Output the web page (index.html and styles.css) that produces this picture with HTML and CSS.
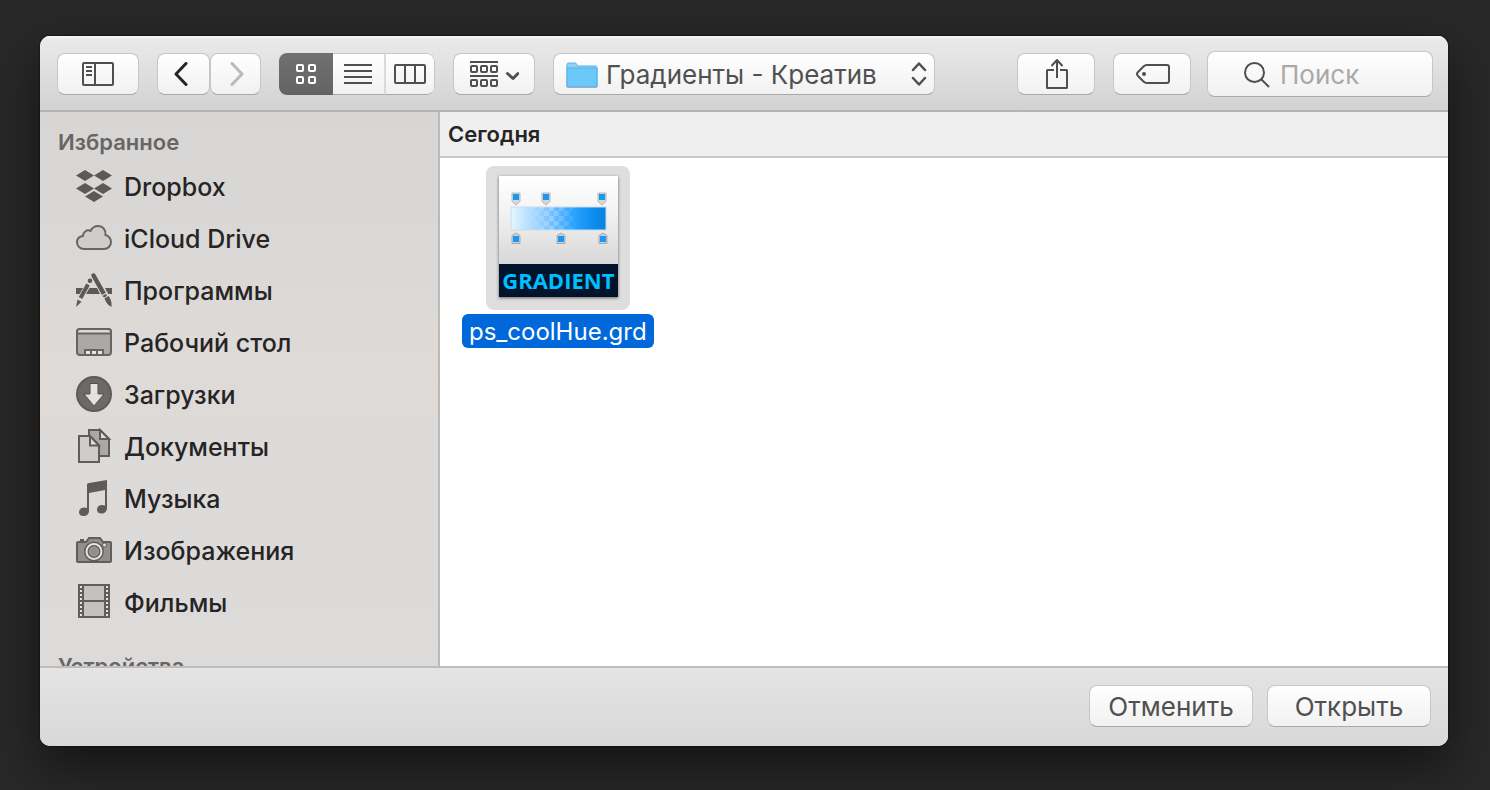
FILE: index.html
```html
<!DOCTYPE html>
<html lang="ru">
<head>
<meta charset="utf-8">
<title>Открыть</title>
<link rel="stylesheet" href="styles.css">
</head>
<body>
<main class="dialog">
  <header class="toolbar">
    <button class="btn btn-wide" type="button" aria-label="Боковая панель">
      <svg width="32" height="24" viewBox="0 0 32 24" fill="none" stroke="#4f4f4f" stroke-width="2"><rect x="1" y="1" width="30" height="22" rx="1"/><path d="M13 1v22M4 5h6M4 9h6M4 13h6"/></svg>
    </button>
    <div class="nav">
      <button class="btn btn-back" type="button" aria-label="Назад">
        <svg width="14" height="24" viewBox="0 0 14 24" fill="none" stroke="#262626" stroke-width="3" stroke-linecap="round" stroke-linejoin="round"><path d="M12 1.5 2 12l10 10.500"/></svg>
      </button>
      <button class="btn btn-forward" type="button" aria-label="Вперед" disabled>
        <svg width="14" height="24" viewBox="0 0 14 24" fill="none" stroke="#b9b9b9" stroke-width="3" stroke-linecap="round" stroke-linejoin="round"><path d="m2 1.500 10 10.500-10 10.500"/></svg>
      </button>
    </div>
    <div class="segments btn" role="group" aria-label="Вид">
      <button class="segment segment-on" type="button" aria-label="Значки" aria-pressed="true">
        <svg width="20" height="20" viewBox="0 0 20 20" fill="none" stroke="#fff" stroke-width="2"><rect x="1" y="1" width="6" height="6" rx="1"/><rect x="13" y="1" width="6" height="6" rx="1"/><rect x="1" y="13" width="6" height="6" rx="1"/><rect x="13" y="13" width="6" height="6" rx="1"/></svg>
      </button>
      <button class="segment segment-list" type="button" aria-label="Список">
        <svg width="28" height="20" viewBox="0 0 28 20" stroke="#4f4f4f" stroke-width="2"><path d="M0 1h28M0 7h28M0 13h28M0 19h28"/></svg>
      </button>
      <button class="segment" type="button" aria-label="Колонки">
        <svg width="32" height="20" viewBox="0 0 32 20" fill="none" stroke="#4f4f4f" stroke-width="2"><rect x="1" y="1" width="30" height="18" rx="1"/><path d="M11 1v18M21 1v18"/></svg>
      </button>
    </div>
    <button class="btn btn-wide" type="button" aria-label="Группировка">
      <svg width="50" height="26" viewBox="0 0 50 26" fill="none" stroke="#4f4f4f" stroke-width="2"><path d="M1 1h28M1 15h28"/><rect x="2" y="5" width="6" height="6" rx="1"/><rect x="12" y="5" width="6" height="6" rx="1"/><rect x="22" y="5" width="6" height="6" rx="1"/><rect x="2" y="19" width="6" height="6" rx="1"/><rect x="12" y="19" width="6" height="6" rx="1"/><rect x="22" y="19" width="6" height="6" rx="1"/><path d="m38.500 12.500 5.500 5 5-5" stroke-width="3" stroke-linecap="round" stroke-linejoin="round"/></svg>
    </button>
    <div class="path">
      <svg class="path-folder" width="32" height="26" viewBox="0 0 32 26"><path d="M1 25V2.500Q1 1 2.500 1H9q1 0 1.500 1l1 2H29.500Q31 4 31 5.500V25z" fill="#8fd0f6" stroke="#58b2e6"/><path d="M1 6h30v18q0 1-1 1H2q-1 0-1-1z" fill="#6cc8f8" stroke="#4fb2ea"/><path d="M1 25h30" stroke="#9aa9b2"/></svg>
      <select class="btn path-select" aria-label="Папка"><option>Градиенты - Креатив</option></select>
      <svg class="path-arrows" width="16" height="24" viewBox="0 0 16 24" fill="none" stroke="#4f4f4f" stroke-width="2.500" stroke-linecap="round" stroke-linejoin="round"><path d="m2 8 6-6.500L14 8M2 16l6 6.500 6-6.500"/></svg>
    </div>
    <div class="toolbar-end">
      <button class="btn btn-action" type="button" aria-label="Поделиться">
        <svg width="24" height="32" viewBox="0 0 24 32" fill="none" stroke="#4f4f4f" stroke-width="2"><path d="M9 12H2.500Q2 12 2 12.500V29.500Q2 30 2.500 30H21.500q.5 0 .5-.5V12.500q0-.5-.5-.5H15M12 20V2"/><path d="M6.500 8 12 2l5.500 6" stroke-linejoin="round"/></svg>
      </button>
      <button class="btn btn-action" type="button" aria-label="Теги">
        <svg width="34" height="20" viewBox="0 0 34 20"><path d="M11 1H31q2 0 2 2V17q0 2-2 2H11Q9 19 7.500 17.500L2 12Q0 10 2 8L7.500 2.500Q9 1 11 1z" fill="none" stroke="#4f4f4f" stroke-width="2"/><circle cx="8" cy="10" r="2" fill="#4f4f4f"/></svg>
      </button>
      <div class="search">
        <svg class="search-icon" width="26" height="26" viewBox="0 0 26 26" fill="none" stroke="#4f4f4f" stroke-width="2"><circle cx="10.500" cy="10.500" r="9.500"/><path d="m17 17 8 8"/></svg>
        <input class="btn search-input" type="text" placeholder="Поиск" aria-label="Поиск">
      </div>
    </div>
  </header>
  <div class="content">
    <nav class="sidebar">
      <h2 class="sidebar-title">Избранное</h2>
      <a class="place" href="#"><svg width="36" height="36" viewBox="0 0 36 36" fill="#5c5a59"><path d="M9 2l9 5.500L9 13 0 7.500zM27 2l9 5.500-9 5.500-9-5.500zM9 15l9 5.500L9 26l-9-5.500zM27 15l9 5.500-9 5.500-9-5.500zM18 23l9 5.500-9 5.500-9-5.500z"/></svg><span class="place-name">Dropbox</span></a>
      <a class="place" href="#"><svg width="36" height="36" viewBox="0 0 36 36"><path d="M8 29C4 29 1 26 1 22.500c0-3.500 2.500-6 6-6.500 0-4 4-7 7.500-5C16 8 18.500 6 22 6c5 0 8 4 7.500 9 3 .5 5.500 3.500 5.500 7 0 4-3 7-7 7z" fill="#cfcdcc" stroke="#676564" stroke-width="2"/></svg><span class="place-name">iCloud Drive</span></a>
      <a class="place" href="#"><svg width="36" height="36" viewBox="0 0 36 36" fill="#5c5a59"><path d="M0 16h7l-3.500 6H0zM13.500 16h7.500l3 6H10zM29 16h7v6h-4z"/><path d="M17.500 3.500 28.500 23" stroke="#5c5a59" stroke-width="4.500" stroke-linecap="round"/><path d="M26 23.500l5.500-3" stroke="#dbd9d7" stroke-width="1.200"/><path d="M28.500 26.500l4-2.500q3.500 4 3 11-5-2.500-7-8.500z"/><path d="M12 12.500 4.500 26" stroke="#5c5a59" stroke-width="4"/><circle cx="14" cy="8.800" r="2.300"/><path d="M1.500 27.500l4 2.200L0 35z"/></svg><span class="place-name">Программы</span></a>
      <a class="place" href="#"><svg width="36" height="36" viewBox="0 0 36 36" stroke="#676564" stroke-width="2"><rect x="1" y="5" width="34" height="26" rx="3" fill="#aba8a6"/><path d="M1 9.500V8q0-3 3-3h28q3 0 3 3v1.500z" fill="#dedbd9"/><path d="M9 31v-5h18v5z" fill="#e7e4e2"/><path d="M15 26v5M21 26v5"/></svg><span class="place-name">Рабочий стол</span></a>
      <a class="place" href="#"><svg width="36" height="36" viewBox="0 0 36 36"><circle cx="18" cy="18" r="17" fill="#6d6967" stroke="#5e5a59" stroke-width="2"/><path d="M14 7.500h8V18h6L18 30 8 18h6z" fill="#e6e2df" stroke="#555150"/></svg><span class="place-name">Загрузки</span></a>
      <a class="place" href="#"><svg width="36" height="36" viewBox="0 0 36 36" stroke="#5f5c5a" stroke-width="2"><path d="M13 2h11l9 9v17H13z" fill="#aba8a5"/><path d="M24 2v9h9z" fill="#e0dddb"/><path d="M3 8h11l9 9.500V34H3z" fill="#cfccc9"/><path d="M14 8v9.500h9z" fill="#e0dddb"/></svg><span class="place-name">Документы</span></a>
      <a class="place" href="#"><svg width="36" height="36" viewBox="0 0 36 36" fill="#5f5b5a"><path d="M13 3 31 0v28c0 3.500-2.500 5.500-5.500 5.500S21 32 21 29.500s2-4.500 5-4.500c1.200 0 2.200.2 3 .6V10l-16 3v18c0 3-2.500 5-5.500 5S3 34.500 3 32.200s2-4.700 5-4.700c1.200 0 2.200.2 3 .6V4.500Q11 3.300 13 3z"/></svg><span class="place-name">Музыка</span></a>
      <a class="place" href="#"><svg width="36" height="36" viewBox="0 0 36 36"><path d="M4 7h4v3H4z" fill="#5f5b5a"/><path d="M2 10h8l3-4h11l3 4h7q1 0 1 1v18q0 1-1 1H2q-1 0-1-1V11q0-1 1-1z" fill="#928e8c" stroke="#625e5c" stroke-width="2"/><circle cx="18" cy="19.500" r="9" fill="#928e8c" stroke="#5f5b5a" stroke-width="2"/><circle cx="18" cy="19.500" r="7.500" fill="#625e5c" stroke="#e5e1de" stroke-width="2"/><circle cx="18" cy="19.500" r="4.500" fill="#928e8c" stroke="#a9a5a2"/><circle cx="28.500" cy="13" r="2" fill="#e5e1de" stroke="#5f5b5a"/></svg><span class="place-name">Изображения</span></a>
      <a class="place" href="#"><svg width="36" height="36" viewBox="0 0 36 36"><path d="M2 0h32v34H2z" fill="#605d5b"/><path d="M8 2h20v14H8zM8 18h20v14H8z" fill="#c4c2c0"/><path d="M5 2v31M31 2v31" stroke="#e5e2e0" stroke-width="2" stroke-dasharray="2 2"/></svg><span class="place-name">Фильмы</span></a>
      <h2 class="sidebar-title sidebar-title-next">Устройства</h2>
    </nav>
    <section class="files">
      <h2 class="files-title">Сегодня</h2>
      <div class="grid">
        <button class="file" type="button">
          <span class="thumb">
            <span class="sheet">
              <svg class="sheet-art" width="119" height="88" viewBox="0 0 119 88">
                <defs>
                  <linearGradient id="blue"><stop offset="0" stop-color="#e6f7ff"/><stop offset=".35" stop-color="#8ccaff"/><stop offset=".65" stop-color="#2ba4ff"/><stop offset=".88" stop-color="#0b8bee"/><stop offset="1" stop-color="#0784dc"/></linearGradient>
                  <linearGradient id="fade"><stop offset="0" stop-color="#fff" stop-opacity="0"/><stop offset=".5" stop-color="#fff"/><stop offset="1" stop-color="#fff" stop-opacity="0"/></linearGradient>
                  <mask id="soft"><path d="M27 31h53v23H27z" fill="url(#fade)"/></mask>
                  <pattern id="check" width="10" height="10" patternUnits="userSpaceOnUse"><path d="M0 0h5v5H0zM5 5h5v5H5z" fill="#fff" opacity=".25"/></pattern>
                  <g id="pin"><path d="M-4-5h8V3.500L0 7-4 3.500z" fill="#d6d6d6" stroke="#b8b8b8"/><path d="M-3-4h6v6h-6z" fill="#1898f5"/></g>
                  <g id="stop"><path d="M-4 4.500h8V-3.500L0-6-4-3.500z" fill="#d0d0d0" stroke="#a8a8a8"/><path d="M-3-3h6v6h-6z" fill="#1898f5"/></g>
                </defs>
                <path d="M12 31h95v23H12z" fill="url(#blue)" stroke="#c8dce8"/>
                <path d="M27 31h53v23H27z" fill="url(#check)" mask="url(#soft)"/>
                <use href="#pin" x="17" y="22"/><use href="#pin" x="47" y="22"/><use href="#pin" x="103" y="22"/>
                <use href="#stop" x="17" y="63"/><use href="#stop" x="62" y="63"/><use href="#stop" x="104" y="63"/>
              </svg>
              <span class="sheet-label">GRADIENT</span>
            </span>
          </span>
          <span class="file-name">ps_coolHue.grd</span>
        </button>
      </div>
    </section>
  </div>
  <footer class="footer">
    <button class="btn btn-text" type="button">Отменить</button>
    <button class="btn btn-text" type="button">Открыть</button>
  </footer>
</main>
</body>
</html>
```
FILE: styles.css
```css
* { box-sizing: border-box; }

body {
  display: flex;
  height: 100vh;
  margin: 0;
  padding: 36px 42px 44px 40px;
  background: #282828;
  color: #262424;
  font-family: Inter, "Liberation Sans", sans-serif;
  overflow: hidden;
}

button, select, input { margin: 0; font: inherit; }
svg { display: block; flex: none; }

.dialog {
  flex: 1;
  display: flex;
  flex-direction: column;
  min-width: 0;
  border-radius: 10px;
  background: #fff;
  overflow: hidden;
  box-shadow: 0 0 2px #000, 0 20px 50px rgba(0, 0, 0, .5);
}

.toolbar {
  display: flex;
  align-items: center;
  gap: 18px;
  height: 76px;
  padding: 2px 15px 0 17px;
  border-bottom: 2px solid #b4b4b4;
  background: linear-gradient(#ebebeb, #d2d2d3);
  box-shadow: inset 0 2px #f4f4f4;
}

.btn {
  display: flex;
  align-items: center;
  justify-content: center;
  height: 42px;
  padding: 0;
  border: 1px solid #c6c6c6;
  border-bottom-color: #a9a9a9;
  border-radius: 8px;
  background: linear-gradient(#fff, #f1f1f1);
  color: #505050;
}

.btn-wide { width: 82px; }
.nav { display: flex; }
.btn-back { width: 53px; padding-right: 6px; }
.btn-forward { width: 51px; padding-left: 2px; }
.btn-action { width: 78px; padding-left: 2px; }
.btn-text { width: 164px; font-size: 26px; }

.segments { width: 156px; border: 0; overflow: hidden; }
.segment {
  flex: 1;
  display: flex;
  align-items: center;
  justify-content: center;
  height: 100%;
  padding: 0;
  border: 1px solid #c6c6c6;
  border-left: 0;
  border-bottom-color: #a9a9a9;
  background: none;
}
.segment:last-child { border-radius: 0 8px 8px 0; }
.segment-on { flex: 0 0 54px; border: 0; background: linear-gradient(#707070, #646464); }
.segment-list { flex: 0 0 53px; padding-right: 2px; border-right: 2px solid #dadada; }

.path { position: relative; width: 382px; }
.path-select {
  width: 100%;
  padding: 0 40px 0 52px;
  appearance: none;
  font-size: 26px;
}
.path-folder, .path-arrows { position: absolute; top: 9px; pointer-events: none; }
.path-folder { left: 13px; }
.path-arrows { right: 8px; }

.toolbar-end { display: flex; align-items: center; gap: 18px; margin-left: auto; }
.search { position: relative; width: 226px; margin-left: -2px; }
.search-input { width: 100%; height: 46px; padding: 0 12px 0 72px; font-size: 26px; }
.search-input::placeholder { color: #a9a9a9; opacity: 1; }
.search-icon { position: absolute; left: 37px; top: 11px; pointer-events: none; }

.content { flex: 1; display: flex; min-height: 0; }

.sidebar {
  flex: 0 0 400px;
  padding: 13px 18px 0;
  border-right: 2px solid #bcbab9;
  background: linear-gradient(#d7d6d4, #dddad8 45%, #dcdbd9);
  overflow: hidden;
}
.sidebar-title {
  margin: 0 0 1px;
  color: #686564;
  font-size: 22px;
  font-weight: 600;
  line-height: 34px;
}
.sidebar-title-next { margin-top: 21px; }
.place {
  display: flex;
  align-items: center;
  gap: 12px;
  height: 52px;
  padding-left: 18px;
  color: inherit;
  font-size: 25px;
  font-weight: 500;
  text-decoration: none;
}
.place-name { padding-top: 2px; }

.files { flex: 1; display: flex; flex-direction: column; min-width: 0; }
.files-title {
  margin: 0;
  padding-left: 8px;
  border-bottom: 2px solid #c8c8c8;
  background: #efefef;
  font-size: 22px;
  font-weight: 600;
  line-height: 44px;
}
.grid { display: flex; flex-wrap: wrap; padding: 8px 22px; }
.file {
  display: flex;
  flex-direction: column;
  align-items: center;
  gap: 4px;
  padding: 0;
  border: 0;
  background: none;
}
.thumb { padding: 10px 12px 13px 13px; border-radius: 8px; background: #dedede; }
.sheet {
  display: block;
  width: 119px;
  background: linear-gradient(#fff, #f3f3f3 30%, #d8d8d8 72%);
  box-shadow: 0 1px 3px rgba(0, 0, 0, .55);
}
.sheet-label {
  display: block;
  background: #02142b;
  color: #00bfff;
  font-family: "Open Sans", sans-serif;
  font-size: 22px;
  font-weight: 700;
  line-height: 33px;
  text-align: center;
}
.file-name {
  padding: 1px 7px 0;
  border-radius: 6px;
  background: #0068da;
  color: #fff;
  font-size: 24px;
  font-weight: 400;
  line-height: 33px;
}

.footer {
  display: flex;
  align-items: center;
  justify-content: flex-end;
  gap: 14px;
  height: 80px;
  padding: 0 17px 2px;
  border-top: 2px solid #bdbdbd;
  background: linear-gradient(#e4e4e4, #d8d8d8);
}
```
